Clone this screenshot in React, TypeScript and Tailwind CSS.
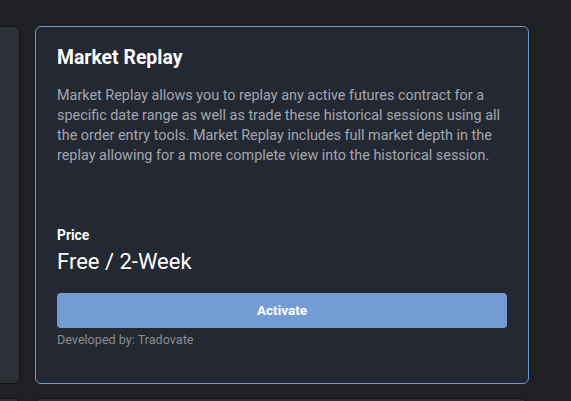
export default function App() {
  return (
    <div
      className="h-[401px] w-[571px] overflow-hidden bg-[#1f2024] pt-[26px]"
      style={{ fontFamily: 'Roboto, "Liberation Sans", sans-serif' }}
    >
      <div className="-ml-[473px] flex gap-[15px]">
        <div className="h-[358px] w-[493px] shrink-0 rounded-[6px] border border-[#111215] bg-[#2e3038]" />
        <div className="flex h-[358px] w-[494px] shrink-0 flex-col rounded-[6px] border border-[#6d98d6] bg-[#242833] px-[21px] pt-[19px]">
          <h2 className="text-[19.4px] leading-[24px] font-bold text-white">Market Replay</h2>
          <p className="mt-[16px] text-[14.4px] leading-[20px] text-[#a3a6ae]">
            Market Replay allows you to replay any active futures contract for a specific date range as well as
            trade these historical sessions using all the order entry tools. Market Replay includes full market
            depth in the replay allowing for a more complete view into the historical session.
          </p>
          <div className="mt-[60px] text-[13.8px] leading-[18px] font-bold text-white">Price</div>
          <div className="mt-[4px] text-[22px] leading-[28px] text-white">Free / 2-Week</div>
          <button className="mt-[17px] h-[35px] w-full shrink-0 rounded-[4px] bg-[#739cd4] text-[13.5px] font-bold text-white">
            Activate
          </button>
          <div className="mt-[4px] text-[12.6px] leading-[16px] text-[#898c94]">Developed by: Tradovate</div>
        </div>
      </div>
      <div className="-ml-[473px] mt-[14px] flex gap-[15px]">
        <div className="h-[40px] w-[493px] shrink-0 rounded-[6px] border border-[#111215] bg-[#2e3038]" />
        <div className="h-[40px] w-[492px] shrink-0 rounded-[6px] border border-[#111215] bg-[#2e3038]" />
      </div>
    </div>
  )
}
